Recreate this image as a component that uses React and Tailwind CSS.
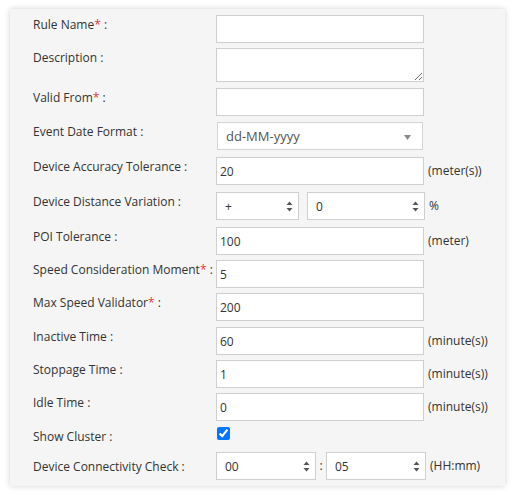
import { useState } from "react";

const font = { fontFamily: "'Open Sans', 'DejaVu Sans', sans-serif" };

function Label({ text, req, pt = "pt-[1px]" }) {
  return (
    <div className={`w-[183px] shrink-0 ${pt} text-[12px] leading-[18px] text-[#333]`}>
      {text}
      {req && <span className="text-[#e53935]">*</span>} :
    </div>
  );
}

function TextInput({ value = "" }) {
  return (
    <input
      type="text"
      defaultValue={value}
      className="w-[208px] h-[28px] shrink-0 border border-[#cfcfcf] bg-white px-[3px] text-[12px] text-[#333] outline-none"
      style={font}
    />
  );
}

function Spinner({ value, w }) {
  return (
    <div className={`relative ${w} h-[28px] shrink-0 border border-[#cfcfcf] bg-white`}>
      <select
        defaultValue={value}
        className="h-full w-full appearance-none bg-transparent pl-[8px] text-[12px] text-[#333] outline-none"
        style={font}
      >
        <option>{value}</option>
      </select>
      <svg className="pointer-events-none absolute right-[5px] top-[8px]" width="7" height="11" viewBox="0 0 7 11">
        <path d="M3.5 0.5 L6.5 4 L0.5 4 Z" fill="#555" />
        <path d="M0.5 7 L6.5 7 L3.5 10.5 Z" fill="#555" />
      </svg>
    </div>
  );
}

function Unit({ children }) {
  return <span className="ml-[4px] pt-[5px] text-[12px] leading-[18px] text-[#333]">{children}</span>;
}

export default function App() {
  const [cluster, setCluster] = useState(true);

  return (
    <div className="min-h-screen bg-white pt-[9px] pl-[10px]" style={font}>
      <div className="w-[495px] h-[477px] bg-[#f5f5f5] pl-[23px] pt-[6px] shadow-[0_0_6px_rgba(0,0,0,0.18)]">
        <div className="flex h-[33px] items-start">
          <Label text="Rule Name" req />
          <TextInput />
        </div>
        <div className="flex h-[40px] items-start">
          <Label text="Description" />
          <textarea className="w-[208px] h-[34px] border border-[#cfcfcf] bg-white outline-none" />
        </div>
        <div className="flex h-[34px] items-start">
          <Label text="Valid From" req />
          <TextInput />
        </div>
        <div className="flex h-[35px] items-start">
          <Label text="Event Date Format" />
          <div className="relative ml-[1px] w-[206px] h-[28px] border border-[#d4d4d4] bg-white">
            <select
              defaultValue="dd-MM-yyyy"
              className="h-full w-full appearance-none bg-transparent pl-[8px] text-[13px] text-[#555] outline-none"
              style={font}
            >
              <option>dd-MM-yyyy</option>
              <option>MM-dd-yyyy</option>
              <option>yyyy-MM-dd</option>
            </select>
            <svg className="pointer-events-none absolute right-[11px] top-[12px]" width="7" height="5" viewBox="0 0 7 5">
              <path d="M0 0 L7 0 L3.5 5 Z" fill="#8a8a8a" />
            </svg>
          </div>
        </div>
        <div className="flex h-[35px] items-start">
          <Label text="Device Accuracy Tolerance" />
          <TextInput value="20" />
          <Unit>(meter(s))</Unit>
        </div>
        <div className="flex h-[35px] items-start">
          <Label text="Device Distance Variation" />
          <Spinner value="+" w="w-[83px]" />
          <div className="w-[8px]" />
          <Spinner value="0" w="w-[118px]" />
          <Unit>%</Unit>
        </div>
        <div className="flex h-[33px] items-start">
          <Label text="POI Tolerance" />
          <TextInput value="100" />
          <Unit>(meter)</Unit>
        </div>
        <div className="flex h-[33px] items-start">
          <Label text="Speed Consideration Moment" req />
          <TextInput value="5" />
        </div>
        <div className="flex h-[34px] items-start">
          <Label text="Max Speed Validator" req />
          <TextInput value="200" />
        </div>
        <div className="flex h-[33px] items-start">
          <Label text="Inactive Time" />
          <TextInput value="60" />
          <Unit>(minute(s))</Unit>
        </div>
        <div className="flex h-[33px] items-start">
          <Label text="Stoppage Time" />
          <TextInput value="1" />
          <Unit>(minute(s))</Unit>
        </div>
        <div className="flex h-[34px] items-start">
          <Label text="Idle Time" />
          <TextInput value="0" />
          <Unit>(minute(s))</Unit>
        </div>
        <div className="flex h-[25px] items-start">
          <Label text="Show Cluster" />
          <input
            type="checkbox"
            checked={cluster}
            onChange={(e) => setCluster(e.target.checked)}
            className="ml-[1px] h-[13px] w-[13px] accent-[#0075ff]"
          />
        </div>
        <div className="flex h-[28px] items-start">
          <Label text="Device Connectivity Check" pt="pt-[6px]" />
          <Spinner value="00" w="w-[100px]" />
          <span className="w-[10px] pt-[5px] text-center text-[12px] leading-[18px] text-[#333]">:</span>
          <Spinner value="05" w="w-[100px]" />
          <Unit>(HH:mm)</Unit>
        </div>
      </div>
    </div>
  );
}
